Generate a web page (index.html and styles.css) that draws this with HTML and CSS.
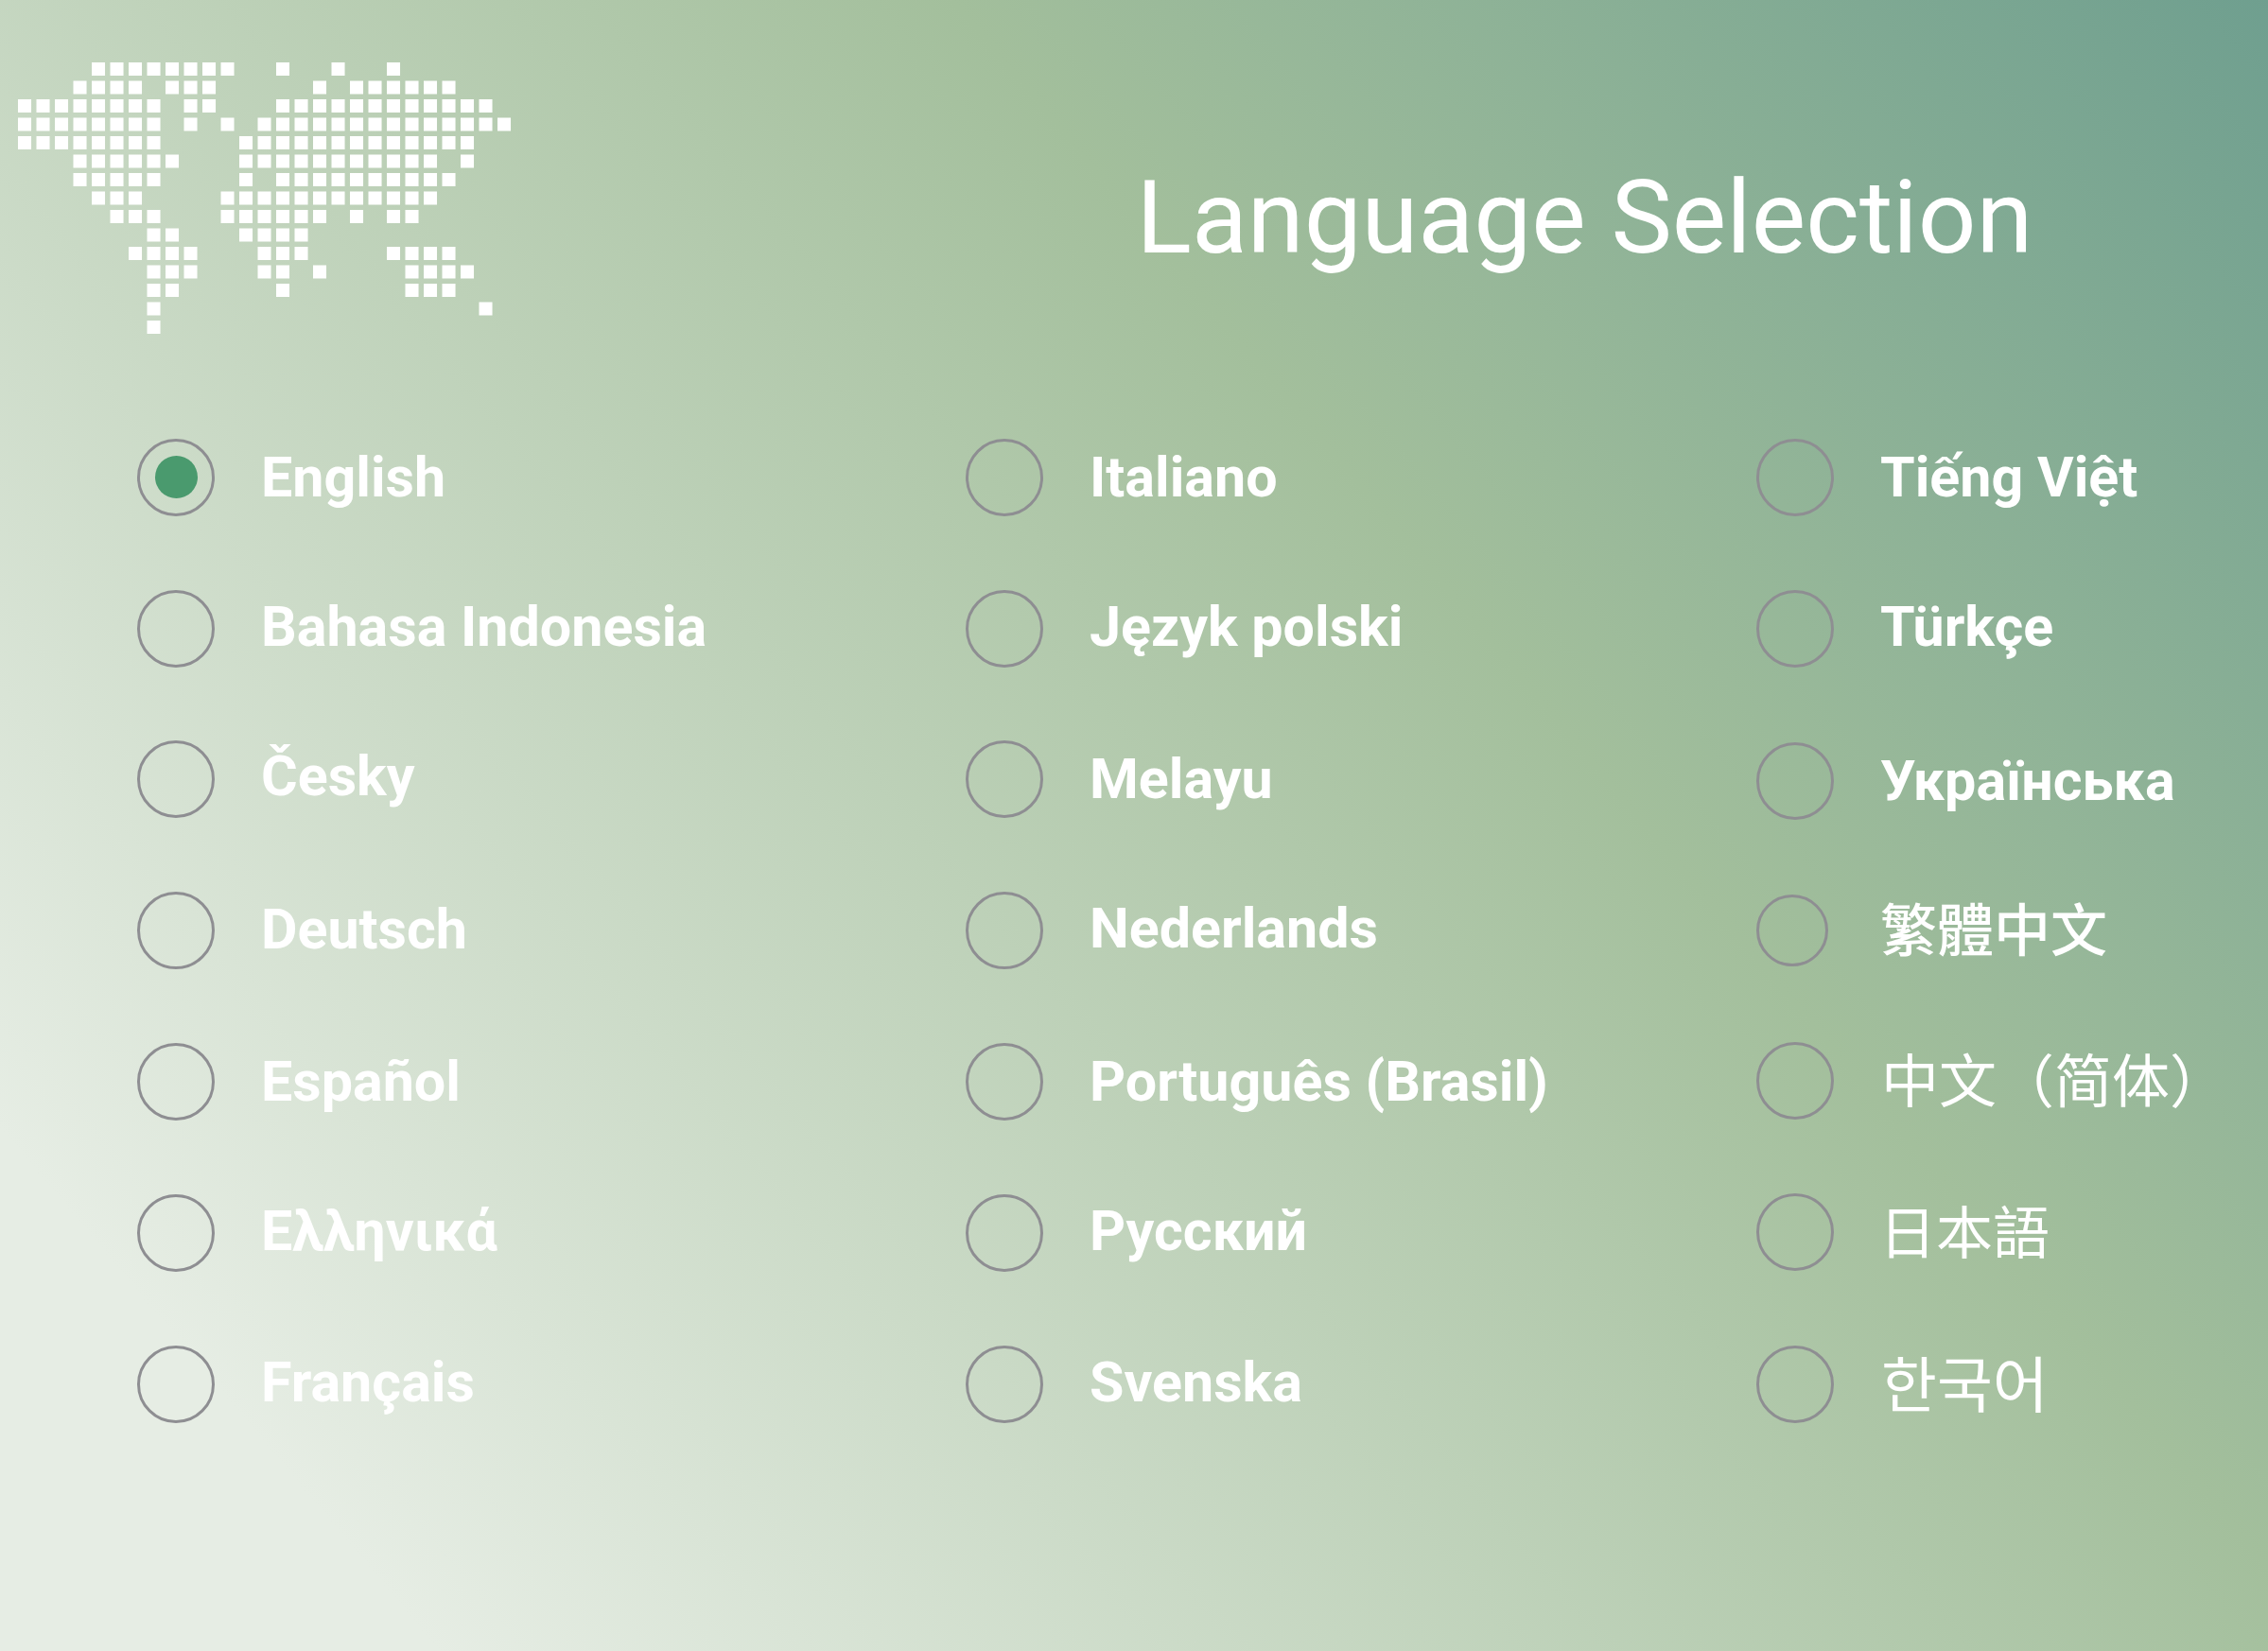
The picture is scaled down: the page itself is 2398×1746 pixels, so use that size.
FILE: index.html
```html
<!DOCTYPE html>
<html lang="en">
<head>
<meta charset="utf-8">
<title>Language Selection</title>
<link rel="stylesheet" href="styles.css">
</head>
<body>
<main class="page">
  <header class="top">
    <svg class="map" width="526.500" height="292.500" viewBox="0 0 27 15" aria-hidden="true">
      <path class="dots" d="M4 .36h7.720M14 .36h.72M17 .36h.72M20 .36h.72
      M3 1.360h3.720M8 1.360h2.720M16 1.360h.72M18 1.360h5.720
      M0 2.360h7.720M9 2.360h1.720M14 2.360h11.720
      M0 3.360h7.720M9 3.360h.72M11 3.360h.72M13 3.360h13.720
      M0 4.360h7.720M12 4.360h12.720
      M3 5.360h5.720M12 5.360h10.720M24 5.360h.72
      M3 6.360h4.720M12 6.360h.72M14 6.360h9.720
      M4 7.360h2.720M11 7.360h11.720
      M5 8.360h2.720M11 8.360h5.720M18 8.360h.72M20 8.360h1.720
      M7 9.360h1.720M12 9.360h3.720
      M6 10.360h3.720M13 10.360h2.720M20 10.360h3.720
      M7 11.360h2.720M13 11.360h1.720M16 11.360h.72M21 11.360h3.720
      M7 12.360h1.720M14 12.360h.72M21 12.360h2.720
      M7 13.360h.72M25 13.360h.72
      M7 14.360h.72"/>
    </svg>
    <h1 class="title">Language Selection</h1>
  </header>
  <section class="langs">
    <label class="opt"><span class="radio on"><span class="dot"></span></span><span class="name">English</span></label>
    <label class="opt"><span class="radio"></span><span class="name">Italiano</span></label>
    <label class="opt"><span class="radio"></span><span class="name">Tiếng Việt</span></label>

    <label class="opt"><span class="radio"></span><span class="name lift-1">Bahasa Indonesia</span></label>
    <label class="opt"><span class="radio"></span><span class="name lift-1">Język polski</span></label>
    <label class="opt"><span class="radio"></span><span class="name lift-1">Türkçe</span></label>

    <label class="opt"><span class="radio"></span><span class="name lift-3">Česky</span></label>
    <label class="opt"><span class="radio"></span><span class="name">Melayu</span></label>
    <label class="opt drop"><span class="radio"></span><span class="name">Українська</span></label>

    <label class="opt"><span class="radio"></span><span class="name lift-1">Deutsch</span></label>
    <label class="opt"><span class="radio"></span><span class="name lift-2">Nederlands</span></label>
    <label class="opt"><span class="radio small"></span><span class="name tc">繁體中文</span></label>

    <label class="opt"><span class="radio"></span><span class="name">Español</span></label>
    <label class="opt"><span class="radio"></span><span class="name">Português (Brasil)</span></label>
    <label class="opt rise"><span class="radio"></span><span class="name cjk sc">中文（简体）</span></label>

    <label class="opt"><span class="radio"></span><span class="name lift-1">Ελληνικά</span></label>
    <label class="opt"><span class="radio"></span><span class="name lift-1">Русский</span></label>
    <label class="opt rise"><span class="radio"></span><span class="name cjk jp">日本語</span></label>

    <label class="opt"><span class="radio"></span><span class="name lift-1">Français</span></label>
    <label class="opt"><span class="radio"></span><span class="name lift-1">Svenska</span></label>
    <label class="opt"><span class="radio"></span><span class="name cjk kr">한국어</span></label>
  </section>
</main>
</body>
</html>
```

FILE: styles.css
```css
html, body {
  margin: 0;
  height: 100%;
}

body {
  overflow: hidden;
}

.page {
  box-sizing: border-box;
  width: 2398px;
  height: 1746px;
  background: linear-gradient(50deg, #e6ede4 12%, #a3bf9c 64%, #6f9f8f 100%);
  font-family: Roboto, "Noto Sans CJK SC", sans-serif;
  color: #fff;
}

.top {
  box-sizing: border-box;
  height: 425px;
  display: flex;
  align-items: flex-start;
  padding: 66px 0 0 19px;
}

.map {
  flex: none;
}

.dots {
  fill: none;
  stroke: #fff;
  stroke-width: .72;
  stroke-dasharray: .72 .28;
}

.title {
  margin: 100px 0 0 656px;
  font-size: 108.400px;
  line-height: 127px;
  font-weight: 400;
  white-space: nowrap;
}

.langs {
  display: grid;
  grid-template-columns: 876px 836px 541px;
  grid-auto-rows: 159.800px;
  padding-left: 145px;
}

.opt {
  display: flex;
  align-items: center;
  gap: 49px;
}

.drop {
  padding-top: 3px;
}

.rise {
  padding-bottom: 2px;
}

.radio {
  box-sizing: border-box;
  flex: none;
  width: 82px;
  height: 82px;
  border: 3px solid #8e8e92;
  border-radius: 50%;
  display: flex;
  align-items: center;
  justify-content: center;
}

.radio.small {
  width: 76px;
  height: 76px;
  margin-right: 6px;
}

.dot {
  width: 45px;
  height: 45px;
  border-radius: 50%;
  background: #4a9a6e;
}

.name {
  font-size: 59.200px;
  font-weight: 700;
  line-height: 70px;
  white-space: nowrap;
}

.lift-1 {
  margin-bottom: 3px;
}

.lift-2 {
  margin-bottom: 5px;
}

.lift-3 {
  margin-bottom: 7px;
}

.cjk {
  font-size: 60px;
  font-weight: 400;
}

.tc {
  font-family: "Noto Sans CJK TC", sans-serif;
  font-size: 60px;
  font-weight: 500;
  margin-bottom: 8px;
}

.sc {
  font-family: "Noto Sans CJK SC", sans-serif;
  font-size: 61px;
  margin-left: 1px;
  margin-bottom: 6px;
}

.jp {
  font-family: "Noto Sans CJK TC", sans-serif;
  margin-left: -1px;
  margin-bottom: 6px;
}

.kr {
  font-family: "Noto Sans CJK KR", sans-serif;
  font-size: 64px;
  margin-left: 1px;
  margin-bottom: 7px;
}
```
